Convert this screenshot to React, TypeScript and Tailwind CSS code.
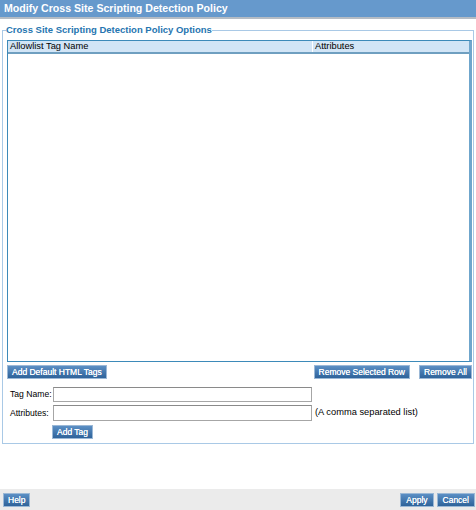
import React from "react";

const btn =
  "h-[14px] px-[4px] text-[8.5px] leading-[12px] text-white border border-[#9bb8d6] bg-gradient-to-b from-[#5b8fc4] to-[#2f639a] whitespace-nowrap [text-shadow:0_0_0.4px_#fff]";

export default function App() {
  return (
    <div className="w-[476px] h-[510px] bg-white flex flex-col font-['Liberation_Sans',Arial,sans-serif] text-[9.3px] text-black">
      <div className="h-[19px] bg-[#6699cc] border-b-2 border-[#b5bcc4] flex items-center px-[4px]">
        <span className="text-white font-bold text-[10.6px] leading-none">Modify Cross Site Scripting Detection Policy</span>
      </div>

      <fieldset className="mx-[2px] mt-[4px] border border-[#a9c9e6] px-[4px] pb-[3px] pt-0 min-w-0">
        <legend className="text-[#2675b0] font-bold text-[9.5px] leading-[14px] px-0 ml-[-1px]">
          Cross Site Scripting Detection Policy Options
        </legend>

        <div className="h-[322px] border border-[#3d8ab9] border-r-[3px] border-r-[#6fa6cc] flex flex-col mt-[3px] mr-[-3px]">
          <div className="flex h-[13px] bg-[#d2e5f6] border-b-2 border-[#6f9fc0] leading-[11px]">
            <div className="w-[305px] pl-[2px] border-r border-white">Allowlist Tag Name</div>
            <div className="flex-1 pl-[2px]">Attributes</div>
          </div>
        </div>

        <div className="flex items-center mt-[3px] gap-[9px] mr-[-3px]">
          <button className={btn}>Add Default HTML Tags</button>
          <div className="flex-1" />
          <button className={btn}>Remove Selected Row</button>
          <button className={btn}>Remove All</button>
        </div>

        <div className="mt-[8px] flex flex-col gap-[3px] pl-[3px]">
          <div className="flex items-center">
            <span className="w-[43px] shrink-0 whitespace-nowrap text-[8.6px]">Tag Name:</span>
            <input className="w-[259px] h-[15px] border border-[#a6a6a6] border-t-[#8a8a8a] bg-white" />
          </div>
          <div className="flex items-center">
            <span className="w-[43px] shrink-0 whitespace-nowrap text-[8.6px]">Attributes:</span>
            <input className="w-[259px] h-[16px] border border-[#a6a6a6] border-t-[#8a8a8a] bg-white" />
            <span className="ml-[3px]">(A comma separated list)</span>
          </div>
          <div className="pl-[42px] mt-[1px]">
            <button className={btn}>Add Tag</button>
          </div>
        </div>
      </fieldset>

      <div className="flex-1" />

      <div className="h-[21px] bg-[#ebebeb] flex items-center pl-[3px] pr-[1px] gap-[3px]">
        <button className={btn}>Help</button>
        <div className="flex-1" />
        <button className={btn + " px-[5px]"}>Apply</button>
        <button className={btn + " px-[5px]"}>Cancel</button>
      </div>
    </div>
  );
}
